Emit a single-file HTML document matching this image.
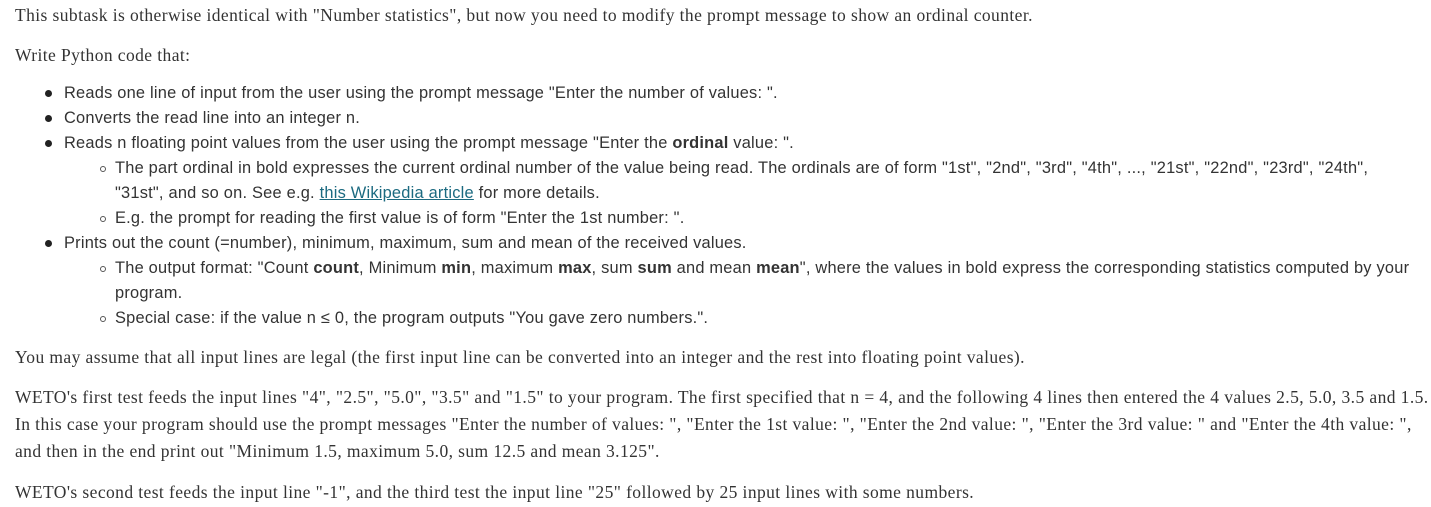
<!DOCTYPE html>
<html><head><meta charset="utf-8"><style>
body{margin:0;width:1431px;height:507px;background:#fff;color:#333;overflow:hidden;position:relative}
.l{position:absolute;white-space:nowrap;line-height:20px}
.s{font-family:"Liberation Serif",serif;font-size:17.5px;letter-spacing:0.41px;left:15px}
.a{font-family:"Liberation Sans",sans-serif;font-size:16.4px;letter-spacing:0.22px}
.b1{left:64px}.b2{left:115px}
.d{position:absolute;width:7px;height:7px;border-radius:50%;background:#222;left:45px}
.c{position:absolute;width:4px;height:4px;border-radius:50%;border:1px solid #555;left:100px}
a{color:#1b6a80;text-decoration:underline}
b{font-weight:bold}
</style></head><body>
<div class="l s" style="top:5px">This subtask is otherwise identical with "Number statistics", but now you need to modify the prompt message to show an ordinal counter.</div>
<div class="l s" style="top:45px">Write Python code that:</div>

<div class="d" style="top:90px"></div>
<div class="l a b1" style="top:83px">Reads one line of input from the user using the prompt message "Enter the number of values: ".</div>
<div class="d" style="top:115px"></div>
<div class="l a b1" style="top:108px">Converts the read line into an integer n.</div>
<div class="d" style="top:140px"></div>
<div class="l a b1" style="top:133px">Reads n floating point values from the user using the prompt message "Enter the <b>ordinal</b> value: ".</div>
<div class="c" style="top:166px"></div>
<div class="l a b2" style="top:158px">The part ordinal in bold expresses the current ordinal number of the value being read. The ordinals are of form "1st", "2nd", "3rd", "4th", ..., "21st", "22nd", "23rd", "24th",</div>
<div class="l a b2" style="top:183px">"31st", and so on. See e.g. <a>this Wikipedia article</a> for more details.</div>
<div class="c" style="top:216px"></div>
<div class="l a b2" style="top:208px">E.g. the prompt for reading the first value is of form "Enter the 1st number: ".</div>
<div class="d" style="top:240px"></div>
<div class="l a b1" style="top:233px">Prints out the count (=number), minimum, maximum, sum and mean of the received values.</div>
<div class="c" style="top:266px"></div>
<div class="l a b2" style="top:258px">The output format: "Count <b>count</b>, Minimum <b>min</b>, maximum <b>max</b>, sum <b>sum</b> and mean <b>mean</b>", where the values in bold express the corresponding statistics computed by your</div>
<div class="l a b2" style="top:283px">program.</div>
<div class="c" style="top:316px"></div>
<div class="l a b2" style="top:308px">Special case: if the value n ≤ 0, the program outputs "You gave zero numbers.".</div>

<div class="l s" style="top:347px">You may assume that all input lines are legal (the first input line can be converted into an integer and the rest into floating point values).</div>
<div class="l s" style="top:387px">WETO's first test feeds the input lines "4", "2.5", "5.0", "3.5" and "1.5" to your program. The first specified that n = 4, and the following 4 lines then entered the 4 values 2.5, 5.0, 3.5 and 1.5.</div>
<div class="l s" style="top:414px">In this case your program should use the prompt messages "Enter the number of values: ", "Enter the 1st value: ", "Enter the 2nd value: ", "Enter the 3rd value: " and "Enter the 4th value: ",</div>
<div class="l s" style="top:441px">and then in the end print out "Minimum 1.5, maximum 5.0, sum 12.5 and mean 3.125".</div>
<div class="l s" style="top:482px">WETO's second test feeds the input line "-1", and the third test the input line "25" followed by 25 input lines with some numbers.</div>
</body></html>
